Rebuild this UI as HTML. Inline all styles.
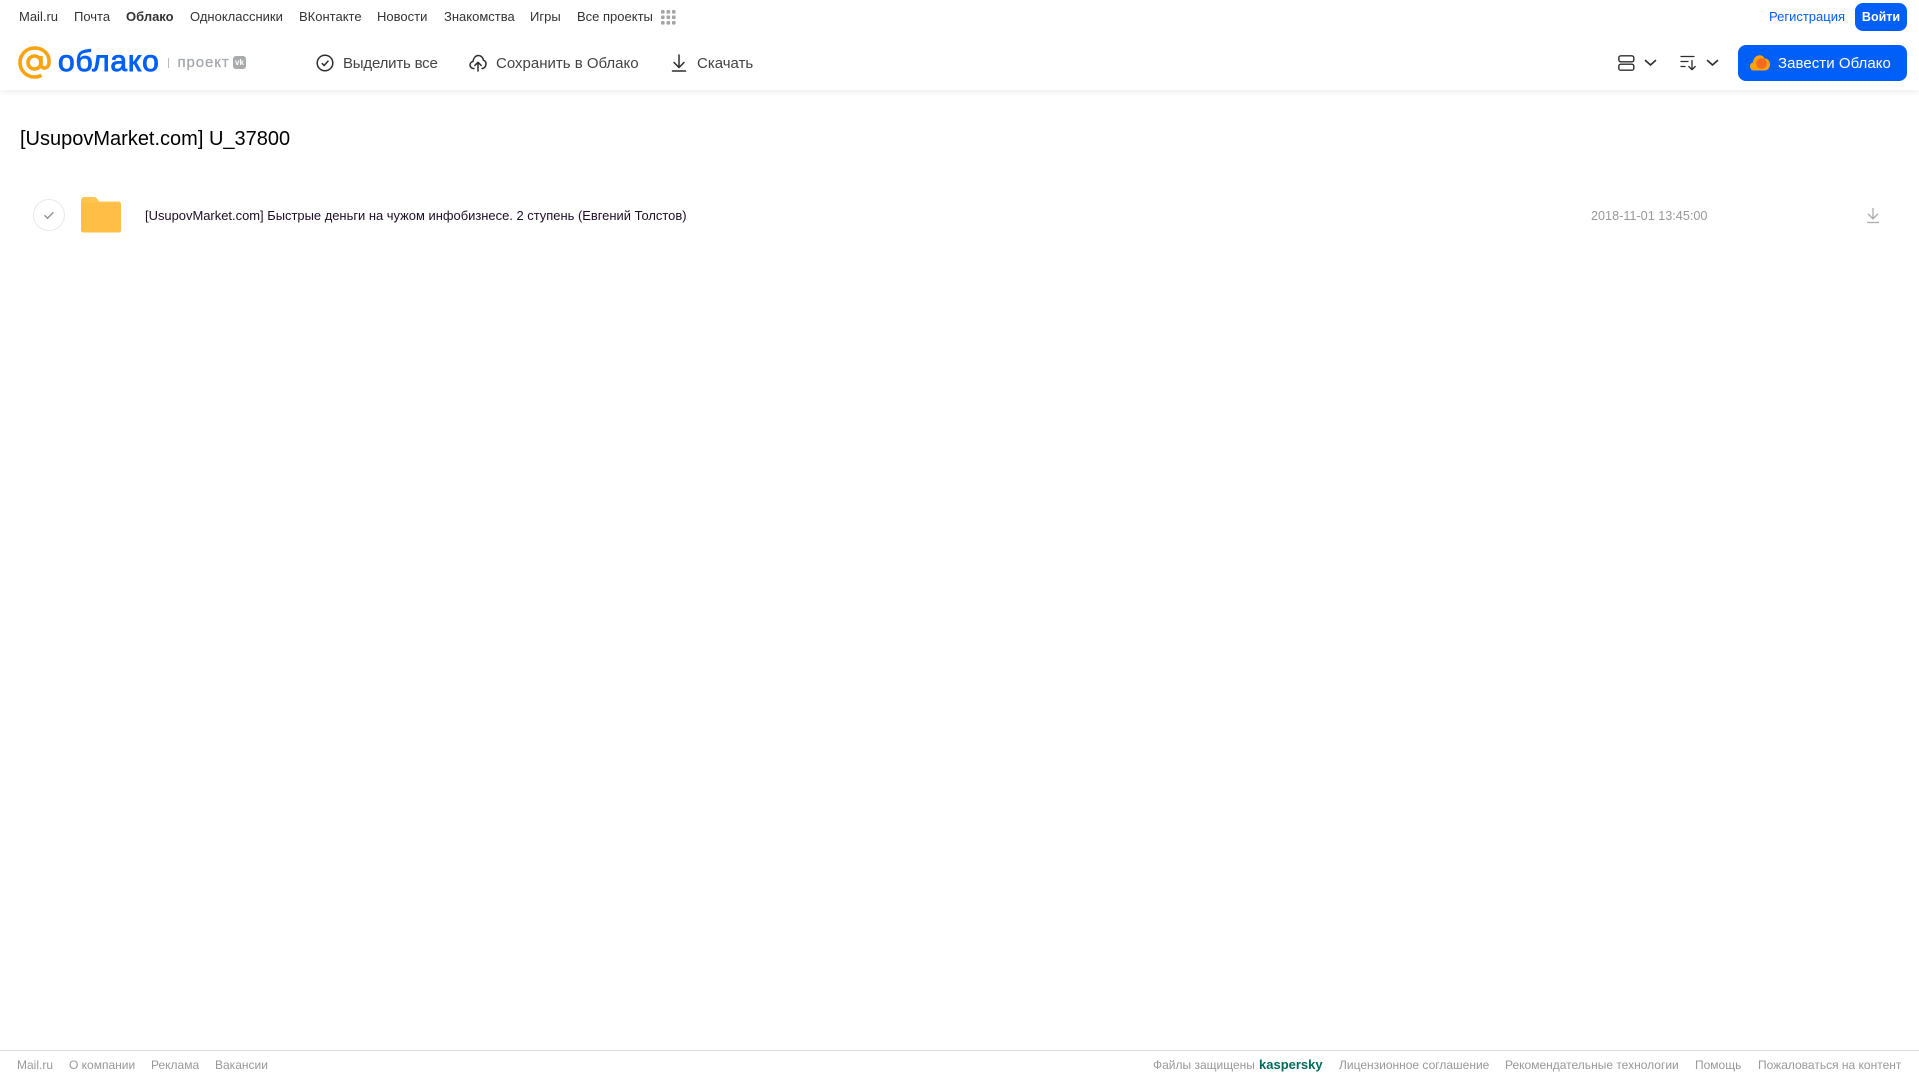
<!DOCTYPE html>
<html lang="ru"><head><meta charset="utf-8"><title>Облако</title>
<style>
html,body{margin:0;padding:0;width:1919px;height:1079px;overflow:hidden;background:#fff;font-family:"Liberation Sans","Noto Sans CJK SC",sans-serif;color:#333}
.t{position:absolute;white-space:nowrap;line-height:20px;height:20px}
.n{font-size:13px;top:7px;color:#333}
.a{font-size:15px;top:53.500px;color:#444}
.f{font-size:12px;top:1055px;color:#999}
svg{position:absolute;overflow:visible}
#hd{position:absolute;left:0;top:0;width:1919px;height:90px;background:#fff;box-shadow:0 2px 6px rgba(0,0,0,.07)}
.btn{position:absolute;background:#005ff9;border-radius:8px}
</style></head><body>
<div id="hd"></div>
<div class="t n" style="left:19px">Mail.ru</div>
<div class="t n" style="left:74px">Почта</div>
<div class="t n" style="left:126px;font-weight:bold">Облако</div>
<div class="t n" style="left:190px">Одноклассники</div>
<div class="t n" style="left:299px">ВКонтакте</div>
<div class="t n" style="left:377px">Новости</div>
<div class="t n" style="left:444px">Знакомства</div>
<div class="t n" style="left:530px">Игры</div>
<div class="t n" style="left:577px">Все проекты</div>
<svg style="left:661px;top:10px" width="15" height="15" fill="#a5a5a5"><rect x="0" y="0" width="3.6" height="3.6" rx="1"/><rect x="5.5" y="0" width="3.6" height="3.6" rx="1"/><rect x="11" y="0" width="3.6" height="3.6" rx="1"/><rect x="0" y="5.5" width="3.6" height="3.6" rx="1"/><rect x="5.5" y="5.5" width="3.6" height="3.6" rx="1"/><rect x="11" y="5.5" width="3.6" height="3.6" rx="1"/><rect x="0" y="11" width="3.6" height="3.6" rx="1"/><rect x="5.5" y="11" width="3.6" height="3.6" rx="1"/><rect x="11" y="11" width="3.6" height="3.6" rx="1"/></svg>

<svg style="left:18px;top:46px" width="34" height="34" fill="none" stroke="#f9a30f" stroke-width="3.600"><circle cx="16.500" cy="16.500" r="6.500"/><path d="M23 10v8.500c0 5 7.500 5 8-1.500C32 8 25 2 16.500 2 8.500 2 2 8.500 2 16.500S8.500 31 16.500 31c2.500 0 5-.6 7-1.700"/></svg>
<div class="t" style="left:58px;top:46px;height:32px;line-height:32px;font-size:30px;font-weight:normal;color:#005ff9;letter-spacing:.8px;-webkit-text-stroke:.9px #005ff9">облако</div>
<div style="position:absolute;left:168px;top:58px;width:1px;height:10px;background:#b8babd"></div>
<div class="t" style="left:177.500px;top:53px;font-size:15px;color:#a5a8ad;letter-spacing:.9px;-webkit-text-stroke:.3px #a5a8ad">проект</div>
<div style="position:absolute;left:233px;top:56px;width:13px;height:13px;border-radius:3px;background:#a9abaf"></div>
<div class="t" style="left:233px;top:56px;width:13px;height:13px;line-height:13px;font-size:8px;font-weight:bold;color:#fff;text-align:center">vk</div>

<svg style="left:316px;top:54px" width="18" height="18" fill="none" stroke="#2c2d2e" stroke-width="1.500"><circle cx="9" cy="9" r="7.800"/><path d="M5.800 9.200l2.300 2.300 4.300-4.700"/></svg>
<div class="t a" style="left:343px;letter-spacing:-.2px">Выделить все</div>
<svg style="left:469px;top:54px" width="18" height="18" fill="none" stroke="#2c2d2e" stroke-width="1.500" stroke-linecap="round" stroke-linejoin="round"><path d="M5 14.500H4.500C2.300 14.500 1 12.800 1 11c0-1.800 1.300-3.200 3-3.500C4.500 4 6.500 1.500 9.300 1.500c2.700 0 4.700 2 5.100 4.600 1.700.4 2.900 2.400 2.600 4.300-.3 2.300-1.900 4.100-4 4.100"/><path d="M9 17V8.500M5.800 11.500L9 8.300l3.200 3.200"/></svg>
<div class="t a" style="left:496px">Сохранить в Облако</div>
<svg style="left:671px;top:54px" width="16" height="18" fill="none" stroke="#2c2d2e" stroke-width="1.500" stroke-linecap="round" stroke-linejoin="round"><path d="M8 1v12M3 8.500L8 13.500l5-5M1.500 17h13"/></svg>
<div class="t a" style="left:697px">Скачать</div>

<svg style="left:1618px;top:55px" width="17" height="16" fill="none" stroke="#2c2d2e" stroke-width="1.400"><rect x=".8" y=".8" width="15" height="6" rx="2"/><rect x=".8" y="9.200" width="15" height="6" rx="2"/></svg>
<svg style="left:1644px;top:59px" width="13" height="8" fill="none" stroke="#2c2d2e" stroke-width="1.600" stroke-linecap="round" stroke-linejoin="round"><path d="M1.500 1.500l5 4.500 5-4.500"/></svg>
<svg style="left:1680px;top:55px" width="17" height="16" fill="none" stroke="#2c2d2e" stroke-width="1.300" stroke-linecap="round" stroke-linejoin="round"><path d="M1 1.500h13M1 6.500h7M1 11.500h4M12 5.500v9M8.800 11.500l3.200 3.200 3.200-3.200"/></svg>
<svg style="left:1706px;top:59px" width="13" height="8" fill="none" stroke="#2c2d2e" stroke-width="1.600" stroke-linecap="round" stroke-linejoin="round"><path d="M1.500 1.500l5 4.500 5-4.500"/></svg>

<div class="t n" style="left:1769px;color:#005ff9">Регистрация</div>
<div class="btn" style="left:1855px;top:3px;width:52px;height:28px"></div>
<div class="t" style="left:1855px;top:7px;width:52px;text-align:center;font-size:12.500px;font-weight:bold;color:#fff">Войти</div>
<div class="btn" style="left:1738px;top:45px;width:169px;height:36px"></div>
<svg style="left:1750px;top:54px" width="20" height="17"><path d="M4 16.500C1.500 16.500 0 14.500 0 12.300c0-2 1.300-3.500 3-3.900C3.300 5 5 2.500 8 1.500c3-.8 5.500.5 6.500 3 3-.3 5.500 2.500 5.500 6 0 3.500-2.500 6-5.500 6z" fill="#f9a30f"/><circle cx="11.500" cy="9.500" r="5.300" fill="#f56a1f"/></svg>
<div class="t" style="left:1778px;top:53.500px;font-size:15px;color:#fff;letter-spacing:.05px">Завести Облако</div>

<div class="t" style="left:20px;top:126px;height:26px;line-height:26px;font-size:20px;color:#000">[UsupovMarket.com] U_37800</div>

<svg style="left:33px;top:199px" width="32" height="32" fill="none"><circle cx="16" cy="16" r="15.500" stroke="#e9e9ea"/><path d="M11.500 16.300l3 3 6-6" stroke="#8e9094" stroke-width="1.400"/></svg>
<svg style="left:81px;top:197px" width="40" height="36"><path d="M0 3.500C0 1.500 1.500 0 3.500 0h9c2 0 3 .8 4 2.200L18 4.500h19.500c1.500 0 2.500 1 2.500 2.500v4H0z" fill="#fec550"/><path d="M0 6h37.500C39 6 40 7 40 8.500V33c0 1.500-1 2.500-2.500 2.500h-35C1 35.500 0 34.500 0 33z" fill="#ffbe45"/></svg>
<div class="t" style="left:145px;top:206px;font-size:12.950px;color:#1f0c26">[UsupovMarket.com] Быстрые деньги на чужом инфобизнесе. 2 ступень (Евгений Толстов)</div>
<div class="t" style="left:1591px;top:206px;font-size:12.650px;color:#999">2018-11-01 13:45:00</div>
<svg style="left:1866px;top:207px" width="14" height="17" fill="none" stroke="#aaa" stroke-width="1.300"><path d="M7 1v10.500M2 6.800l5 5 5-5M1 15.500h12"/></svg>

<div style="position:absolute;left:0;top:1050px;width:1919px;height:1px;background:#dcdcdc"></div>
<div class="t f" style="left:17px">Mail.ru</div>
<div class="t f" style="left:69px">О компании</div>
<div class="t f" style="left:151px">Реклама</div>
<div class="t f" style="left:215px">Вакансии</div>
<div class="t f" style="left:1153px">Файлы защищены</div>
<div class="t f" style="left:1259px;font-weight:bold;font-size:13px;color:#006d5c">kaspersky</div>
<div class="t f" style="left:1339px">Лицензионное соглашение</div>
<div class="t f" style="left:1505px">Рекомендательные технологии</div>
<div class="t f" style="left:1695px">Помощь</div>
<div class="t f" style="left:1758px">Пожаловаться на контент</div>
</body></html>
